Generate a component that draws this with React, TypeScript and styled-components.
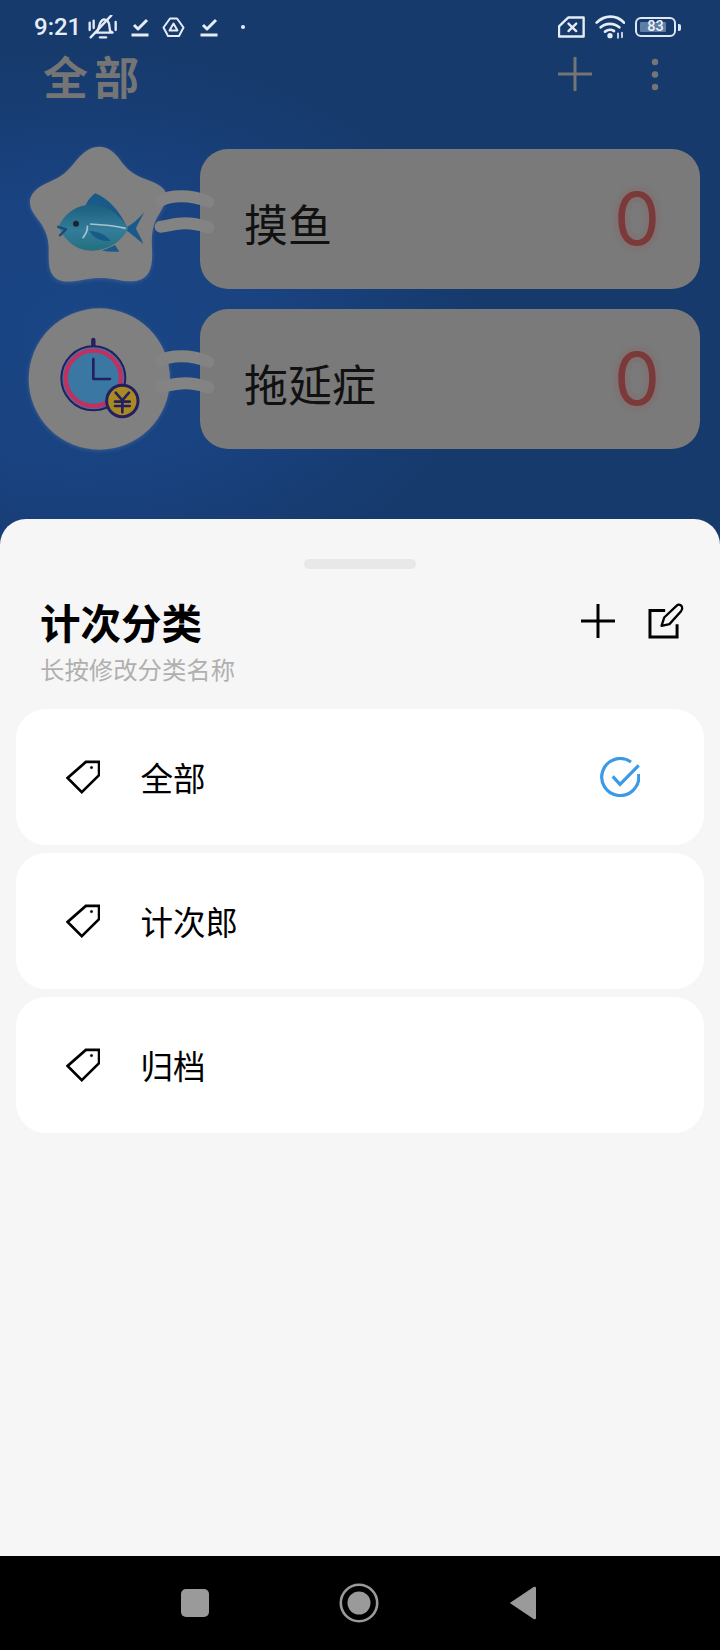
import React from "react";
import styled, { createGlobalStyle } from "styled-components";

const Global = createGlobalStyle`
  html, body { margin: 0; padding: 0; background: #000; }
  * { box-sizing: border-box; }
`;

const CJK = `"Noto Sans CJK SC", "Noto Sans", sans-serif`;

const Screen = styled.div`
  width: 720px;
  height: 1650px;
  display: flex;
  flex-direction: column;
  overflow: hidden;
  font-family: ${CJK};
  background: radial-gradient(ellipse 400px 280px at 80px 330px, #1a4685 0%, #194280 50%, #163a6c 100%) #163a6c;
`;
const Top = styled.div`
  height: 519px;
  flex: none;
`;
const StatusBar = styled.div`
  height: 54px;
  padding: 15px 39px 0 34px;
  display: flex;
  justify-content: space-between;
  align-items: flex-start;
`;
const StatusGroup = styled.div`
  display: flex;
  align-items: center;
  height: 24px;
`;
const Time = styled.span`
  font: 500 24px/24px Roboto, sans-serif;
  color: #e6ecf5;
  width: 46px;
  white-space: nowrap;
`;
const StatusIcon = styled.svg<{ $gap: number }>`
  display: block;
  flex: none;
  margin-left: ${(p) => p.$gap}px;
  fill: none;
  stroke: #e6ecf5;
  stroke-linecap: round;
  stroke-linejoin: round;
`;
const Battery = styled.div`
  width: 46px;
  height: 20px;
  margin-left: 10px;
  display: flex;
  align-items: center;
  flex: none;
`;
const BatteryBody = styled.div`
  position: relative;
  width: 41px;
  height: 20px;
  border: 2px solid #dfe7f2;
  border-radius: 6px;
  display: flex;
  align-items: center;
  justify-content: center;
  color: #eef2f8;
  font: 500 14.5px/16px Roboto, sans-serif;
`;
const BatteryFill = styled.div`
  position: absolute;
  left: 3px;
  top: 3px;
  bottom: 3px;
  width: 26px;
  background: #5f7ea6;
  border-radius: 1px;
`;
const BatteryText = styled.span`
  position: relative;
`;
const BatteryNub = styled.div`
  width: 3px;
  height: 7px;
  margin-left: 2px;
  background: #dfe7f2;
  border-radius: 0 2px 2px 0;
`;
const AppHeader = styled.div`
  height: 44px;
  padding: 0 61px 0 43px;
  display: flex;
  align-items: center;
  justify-content: space-between;
`;
const AppTitle = styled.h1`
  margin: 0;
  font: 700 45px/44px ${CJK};
  letter-spacing: 6px;
  color: #757575;
`;
const HeaderActions = styled.div`
  display: flex;
  align-items: center;
  gap: 59px;
  padding-bottom: 5px;
`;
const Rows = styled.div`
  padding: 51px 20px 0 28px;
  display: flex;
  flex-direction: column;
  gap: 20px;
`;
const Row = styled.div`
  position: relative;
  height: 140px;
  display: flex;
  align-items: center;
  gap: 30px;
`;
const Avatar = styled.svg`
  display: block;
  width: 142px;
  height: 142px;
  flex: none;
  overflow: visible;
  filter: drop-shadow(0 1px 2px rgba(190, 205, 225, 0.2));
`;
const Connector = styled.svg`
  position: absolute;
  left: 122px;
  top: 30px;
  width: 70px;
  height: 50px;
  overflow: visible;
  fill: none;
  stroke: #838383;
  stroke-width: 36;
  stroke-linecap: round;
`;
const Card = styled.div`
  flex: 1;
  height: 140px;
  background: #7a7a7a;
  border-radius: 28px;
  padding: 0 40px 0 44px;
  display: flex;
  align-items: center;
  justify-content: space-between;
`;
const CardName = styled.span`
  font: 400 44px/50px ${CJK};
  color: #111;
  position: relative;
  top: 4px;
`;
const CardCount = styled.span`
  font: 400 73px/80px Inter, sans-serif;
  color: #7a3a3a;
  text-shadow: 0 0 3px #827272, 0 0 4px #827272, 0 0 5px #827272, 0 0 6px #827272, 0 0 6px #827272;
`;
const Sheet = styled.div`
  flex: 1;
  background: #f6f6f6;
  border-radius: 26px 26px 0 0;
  padding: 40px 16px 0;
  display: flex;
  flex-direction: column;
`;
const Handle = styled.div`
  width: 112px;
  height: 10px;
  border-radius: 5px;
  background: #e8e8e8;
  align-self: center;
`;
const SheetHeader = styled.div`
  margin-top: 23px;
  padding: 0 19px 0 24px;
  display: flex;
  justify-content: space-between;
  align-items: flex-start;
`;
const SheetTitle = styled.h2`
  margin: 0;
  font: 700 40.5px/60px ${CJK};
  color: #000;
`;
const SheetHint = styled.p`
  margin: 2px 0 0;
  font: 400 24.4px/30px ${CJK};
  color: #b0b0b0;
`;
const SheetActions = styled.div`
  display: flex;
  align-items: center;
  gap: 32px;
  padding-top: 10px;
`;
const List = styled.div`
  margin-top: 25px;
  display: flex;
  flex-direction: column;
  gap: 8px;
`;
const Item = styled.div`
  height: 136px;
  background: #fff;
  border-radius: 30px;
  padding: 0 64px 0 50px;
  display: flex;
  align-items: center;
  gap: 40.5px;
`;
const ItemLabel = styled.span`
  flex: 1;
  font: 400 32.5px/46px ${CJK};
  color: #000;
`;
const LineIcon = styled.svg`
  display: block;
  flex: none;
  fill: none;
  stroke: currentColor;
`;
const NavBar = styled.div`
  height: 94px;
  flex: none;
  background: #000;
  display: flex;
  align-items: center;
  padding: 0 184px 0 181px;
  justify-content: space-between;
`;
const NavSquare = styled.div`
  width: 28px;
  height: 28px;
  border-radius: 5px;
  background: #9a9a9a;
`;

const Plus = ({ size, color, width }: { size: number; color: string; width: number }) => (
  <LineIcon width={size} height={size} viewBox="0 0 34 34" style={{ color }}>
    <path d="M17 0V34M0 17H34" strokeWidth={width} />
  </LineIcon>
);

const Check = ({ gap }: { gap: number }) => (
  <StatusIcon $gap={gap} width={18} height={20} viewBox="0 0 18 20" strokeWidth={3}>
    <path d="M3 8l4 4L16 3" strokeLinecap="butt" />
    <path d="M0.5 18H17.5" strokeLinecap="butt" />
  </StatusIcon>
);

const Tag = () => (
  <LineIcon width={34} height={34} viewBox="0 0 36 36" strokeWidth={2.8}>
    <path d="M35 2V16L16.7 34 1.7 19 21 2Z" strokeLinejoin="miter" />
    <circle cx={27} cy={8} r={1.2} fill="currentColor" strokeWidth={0.8} />
  </LineIcon>
);

const Star = () => (
  <Avatar viewBox="84 54 426 426">
    <defs>
      <linearGradient id="fishBody" x1="0" y1="0" x2="0" y2="1">
        <stop offset="0" stopColor="#1c5f7e" />
        <stop offset="0.55" stopColor="#347c9b" />
        <stop offset="1" stopColor="#22707f" />
      </linearGradient>
    </defs>
    <path
      d="M298 50C325 50 345 68 362 92C378 114 398 132 426 143C456 155 492 166 498 190C503 212 486 238 474 258C458 284 454 315 456 352C458 388 456 420 438 438C418 458 385 456 352 449C318 442 285 442 250 449C215 456 182 460 162 440C144 420 146 390 146 355C146 318 132 290 112 266C98 248 88 232 90 210C94 182 125 165 160 150C195 135 212 112 230 90C248 68 270 50 298 50Z"
      fill="#808080"
    />
    <path d="M255 230C262 212 275 197 286 190C325 205 360 245 380 290Z" fill="#1a5a8a" />
    <path d="M372 296C395 285 415 268 432 247C425 265 412 282 408 296C415 312 425 325 430 342C410 325 392 310 372 296Z" fill="#1a5a8a" />
    <path d="M306 362C325 355 340 348 345 345L358 365C340 366 322 365 306 362Z" fill="#1a5a8a" />
    <path d="M176 290C190 255 225 224 275 224C325 224 365 262 385 295C365 335 325 362 275 362C225 362 190 325 176 290Z" fill="url(#fishBody)" />
    <path d="M172 290L198 298 178 318" fill="none" stroke="#174c78" strokeWidth="7" strokeLinejoin="round" />
    <circle cx="228" cy="281" r="9" fill="#1b2532" />
    <path d="M270 282C310 284 345 288 377 295" fill="none" stroke="#a9c2cc" strokeWidth="5" />
    <path d="M262 287C264 300 258 312 248 325" fill="none" stroke="#a9c2cc" strokeWidth="5" />
    <path d="M268 303C295 305 320 315 331 333C305 335 280 325 268 303Z" fill="#1a5a8a" />
  </Avatar>
);

const Clock = () => (
  <Avatar viewBox="84 39 426 426">
    <circle cx="298" cy="252" r="212" fill="#808080" />
    <path d="M280 135V155" stroke="#231f60" strokeWidth="13" strokeLinecap="round" />
    <circle cx="280" cy="250" r="96" fill="#3a77a3" stroke="#231f60" strokeWidth="6" />
    <circle cx="280" cy="250" r="83" fill="none" stroke="#c2305f" strokeWidth="13" />
    <path d="M280 192V252H330" fill="none" stroke="#231f60" strokeWidth="8" strokeLinecap="round" strokeLinejoin="round" />
    <circle cx="367" cy="318" r="47" fill="#a98a22" stroke="#231f60" strokeWidth="9" />
    <path d="M347 293L367 316 387 293M345 320H389M345 333H389M367 316V352" fill="none" stroke="#231f60" strokeWidth="8" strokeLinecap="round" />
  </Avatar>
);

const Links = () => (
  <Connector viewBox="450 147 210 150">
    <path d="M482 212C510 195 570 192 625 215" />
    <path d="M482 290C520 287 545 268 625 292" />
  </Connector>
);

const rows = [
  { name: "摸鱼", art: <Star /> },
  { name: "拖延症", art: <Clock /> },
];
const items = ["全部", "计次郎", "归档"];

export default function App() {
  return (
    <Screen>
      <Global />
      <Top>
        <StatusBar>
          <StatusGroup>
            <Time>9:21</Time>
            <StatusIcon $gap={8} width={30} height={25} viewBox="265 45 88 75" strokeWidth={7}>
              <path d="M290 96C300 88 294 62 312 58C330 60 328 80 330 92L338 98H288Z" />
              <path d="M300 112H318" />
              <path d="M272 112L334 46" />
              <path d="M269 68V90M281 62V84M347 66V90" />
            </StatusIcon>
            <Check gap={13} />
            <StatusIcon $gap={13} width={23} height={21} viewBox="0 0 23 21" strokeWidth={2}>
              <path d="M8 1.5H15L21.5 10.5 17 19H6L1.5 10.5Z" />
              <path d="M11.5 6.5L15.5 13.5H7.5Z" />
            </StatusIcon>
            <Check gap={15} />
            <StatusIcon $gap={23} width={4} height={4} viewBox="0 0 4 4" strokeWidth={0}>
              <circle cx={2} cy={2} r={2} fill="#e6ecf5" />
            </StatusIcon>
          </StatusGroup>
          <StatusGroup>
            <StatusIcon $gap={0} width={27} height={22} viewBox="595 50 80 64" strokeWidth={7}>
              <path d="M598 80L625 54H671V110H598Z" />
              <path d="M626 72L649 94M649 72L626 94" />
            </StatusIcon>
            <StatusIcon $gap={10} width={30} height={24} viewBox="703 45 90 72" strokeWidth={8}>
              <path d="M708 68C732 44 768 44 790 68" />
              <path d="M720 82C735 68 760 68 776 82" />
              <path d="M733 95C742 88 752 88 760 93" />
              <circle cx={748} cy={107} r={4} fill="#e6ecf5" />
              <path d="M772 100V114M784 98V112" strokeWidth={5} />
            </StatusIcon>
            <Battery>
              <BatteryBody>
                <BatteryFill />
                <BatteryText>83</BatteryText>
              </BatteryBody>
              <BatteryNub />
            </Battery>
          </StatusGroup>
        </StatusBar>
        <AppHeader>
          <AppTitle>全部</AppTitle>
          <HeaderActions>
            <Plus size={34} color="#757575" width={3} />
            <LineIcon width={8} height={34} viewBox="0 0 8 34" strokeWidth={0} style={{ color: "#757575" }}>
              <circle cx={4} cy={5} r={3.2} fill="currentColor" />
              <circle cx={4} cy={17.5} r={3.2} fill="currentColor" />
              <circle cx={4} cy={30} r={3.2} fill="currentColor" />
            </LineIcon>
          </HeaderActions>
        </AppHeader>
        <Rows>
          {rows.map((r) => (
            <Row key={r.name}>
              {r.art}
              <Links />
              <Card>
                <CardName>{r.name}</CardName>
                <CardCount>0</CardCount>
              </Card>
            </Row>
          ))}
        </Rows>
      </Top>
      <Sheet>
        <Handle />
        <SheetHeader>
          <div>
            <SheetTitle>计次分类</SheetTitle>
            <SheetHint>长按修改分类名称</SheetHint>
          </div>
          <SheetActions>
            <Plus size={34} color="#000" width={3} />
            <LineIcon width={38} height={38} viewBox="500 305 115 115" strokeWidth={9} style={{ color: "#000" }}>
              <path d="M555 331H509V411H591V372" strokeLinejoin="miter" />
              <path d="M544 377L552 352 590 316C596 310 604 314 606 320 608 325 606 329 603 333L568 372Z" strokeWidth={7} strokeLinejoin="round" />
            </LineIcon>
          </SheetActions>
        </SheetHeader>
        <List>
          {items.map((label, i) => (
            <Item key={label}>
              <Tag />
              <ItemLabel>{label}</ItemLabel>
              {i === 0 && (
                <LineIcon width={40} height={40} viewBox="0 0 40 40" strokeWidth={3.2} style={{ color: "#3a9ae8" }}>
                  <path d="M31 5A18.5 18.5 0 1 0 38.5 17" />
                  <path d="M12.7 19.3L20 27.3 38.7 8.3" />
                </LineIcon>
              )}
            </Item>
          ))}
        </List>
      </Sheet>
      <NavBar>
        <NavSquare />
        <LineIcon width={40} height={40} viewBox="0 0 40 40" style={{ color: "#9a9a9a" }} strokeWidth={2.6}>
          <circle cx={20} cy={20} r={18.2} />
          <circle cx={20} cy={20} r={11.5} fill="currentColor" strokeWidth={0} />
        </LineIcon>
        <LineIcon width={27} height={34} viewBox="0 0 27 34" style={{ color: "#9a9a9a" }} strokeWidth={0}>
          <path d="M0.8 17L25 0.8C26 0.3 27 1 27 2V32C27 33 26 33.7 25 33.2Z" fill="currentColor" />
        </LineIcon>
      </NavBar>
    </Screen>
  );
}
